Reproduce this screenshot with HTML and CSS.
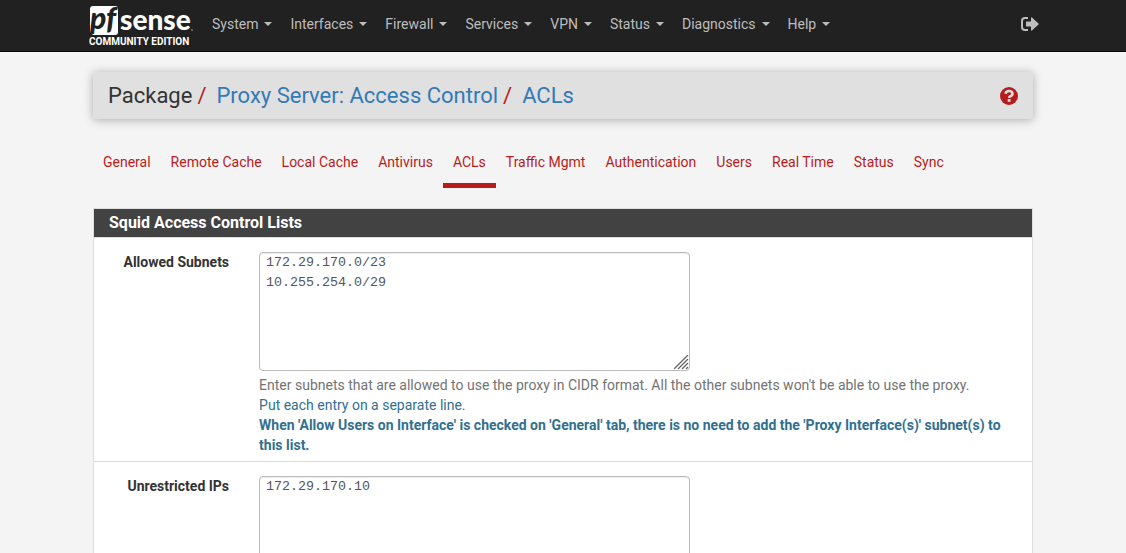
FILE: index.html
```html
<!DOCTYPE html>
<html lang="en">
<head>
    <meta charset="UTF-8">
    <meta name="viewport" content="width=device-width, initial-scale=1">
    <title>Package / Proxy Server: Access Control / ACLs</title>
    <link rel="stylesheet" href="styles.css">
</head>
<body>
    <nav class="navbar">
        <div class="container navbar-inner">
            <a class="brand" href="#" aria-label="pfSense Community Edition">
                <svg width="108" height="42" viewBox="0 0 108 42">
                    <path class="brand-box" d="M7 1H29a3 3 0 0 1 3 3V27a3 3 0 0 1-3 3H7L4 27V4a3 3 0 0 1 3-3z"/>
                    <text class="brand-pf" x="4" y="24">pf</text>
                    <text class="brand-sense" x="34" y="25">sense</text>
                    <circle class="brand-dot" cx="106" cy="25" r="1"/>
                    <text class="brand-edition" x="3" y="40">COMMUNITY EDITION</text>
                </svg>
            </a>
            <ul class="nav">
                <li><a href="#">System <span class="caret"></span></a></li>
                <li><a href="#">Interfaces <span class="caret"></span></a></li>
                <li><a href="#">Firewall <span class="caret"></span></a></li>
                <li><a href="#">Services <span class="caret"></span></a></li>
                <li><a href="#">VPN <span class="caret"></span></a></li>
                <li><a href="#">Status <span class="caret"></span></a></li>
                <li><a href="#">Diagnostics <span class="caret"></span></a></li>
                <li><a href="#">Help <span class="caret"></span></a></li>
            </ul>
            <a class="logout" href="#" aria-label="Logout">
                <svg width="18" height="14" viewBox="0 0 18 14">
                    <path d="M7 1H4a3 3 0 0 0-3 3v6a3 3 0 0 0 3 3h3" fill="none" stroke="currentColor" stroke-width="2"/>
                    <path d="M5 4.500h5V1q0-1 1-.5l7 6.500-7 6.500q-1 .5-1-.5V9.500H5z" fill="currentColor"/>
                </svg>
            </a>
        </div>
    </nav>

    <div class="container">
        <header class="page-header">
            <h1 class="breadcrumb">
                <span>Package</span>
                <span class="slash">/</span>
                <a href="#">Proxy Server: Access Control</a>
                <span class="slash">/</span>
                <a href="#">ACLs</a>
            </h1>
            <a class="help" href="#" aria-label="Help">
                <svg width="18" height="18" viewBox="0 0 18 18">
                    <circle cx="9" cy="9" r="9" fill="currentColor"/>
                    <path d="M5.500 6.700Q6 4 9 4q3.500 0 3.500 2.700 0 1.500-1.800 2.300-1.500.6-1.500 2" fill="none" stroke="#e0e0e0" stroke-width="2.600"/>
                    <rect x="7.700" y="12" width="2.800" height="2.800" fill="#e0e0e0"/>
                </svg>
            </a>
        </header>

        <ul class="tabs">
            <li><a href="#">General</a></li>
            <li><a href="#">Remote Cache</a></li>
            <li><a href="#">Local Cache</a></li>
            <li><a href="#">Antivirus</a></li>
            <li class="active"><a href="#">ACLs</a></li>
            <li><a href="#">Traffic Mgmt</a></li>
            <li><a href="#">Authentication</a></li>
            <li><a href="#">Users</a></li>
            <li><a href="#">Real Time</a></li>
            <li><a href="#">Status</a></li>
            <li><a href="#">Sync</a></li>
        </ul>

        <form class="panel">
            <h2 class="panel-title">Squid Access Control Lists</h2>
            <div class="form-group">
                <label for="allowed_subnets">Allowed Subnets</label>
                <div class="field">
                    <textarea id="allowed_subnets" spellcheck="false">172.29.170.0/23
10.255.254.0/29</textarea>
                    <p class="help-block">
                        Enter subnets that are allowed to use the proxy in CIDR format. All the other subnets won't be able to use the proxy.<br>
                        <span class="text-info">Put each entry on a separate line.<br>
                        <strong>When 'Allow Users on Interface' is checked on 'General' tab, there is no need to add the 'Proxy Interface(s)' subnet(s) to this list.</strong></span>
                    </p>
                </div>
            </div>
            <div class="form-group">
                <label for="unrestricted_hosts">Unrestricted IPs</label>
                <div class="field">
                    <textarea id="unrestricted_hosts" spellcheck="false">172.29.170.10</textarea>
                </div>
            </div>
        </form>
    </div>
</body>
</html>
```
FILE: styles.css
```css
* {
    box-sizing: border-box;
}

html {
    scrollbar-width: none;
}

body {
    margin: 0;
    background: #f4f4f4;
    color: #333;
    font-family: Roboto, sans-serif;
    font-size: 14px;
    line-height: 20px;
}

a {
    color: #337ab7;
    text-decoration: none;
}

.container {
    max-width: 970px;
    margin: 0 auto;
    padding: 0 15px;
}

/* top bar */
.navbar {
    background: #212121;
    border-bottom: 1px solid #080808;
    margin-bottom: 20px;
}

.navbar-inner {
    display: flex;
    align-items: center;
    min-height: 51px;
    padding: 0 8px;
}

.brand {
    display: flex;
    margin-right: 9px;
}

.brand svg {
    overflow: visible;
}

.brand-box {
    fill: #fff;
}

.brand-pf {
    fill: #212121;
    font: italic 900 30px Lato, sans-serif;
}

.brand-sense {
    fill: #fff;
    font: 900 28px Lato, sans-serif;
}

.brand-dot {
    fill: #777;
}

.brand-edition {
    fill: #fff;
    font: 700 10px Roboto, sans-serif;
}

.nav {
    display: flex;
    flex: 1;
    margin: 0;
    padding: 0;
    list-style: none;
}

.nav a {
    display: flex;
    align-items: center;
    gap: 6px;
    padding: 0 9px;
    color: #bdbdbd;
    white-space: nowrap;
}

.nav li {
    padding-bottom: 3px;
}

.caret {
    border-top: 4px solid;
    border-left: 4px solid transparent;
    border-right: 4px solid transparent;
}

.logout {
    display: flex;
    color: #bdbdbd;
    padding: 0 1px 4px;
}

/* breadcrumb bar */
.page-header {
    display: flex;
    align-items: center;
    justify-content: space-between;
    padding: 10px 15px 9px;
    margin-bottom: 28px;
    background: #e0e0e0;
    border-radius: 2px;
    box-shadow: 0 1px 10px rgba(0, 0, 0, 0.3);
}

.breadcrumb {
    display: flex;
    margin: 0;
    font-size: 22px;
    font-weight: 400;
    line-height: 28px;
}

.slash {
    padding: 0 10px 0 5px;
    color: #b71c1c;
}

.help {
    display: flex;
    color: #b71c1c;
}

/* tabs */
.tabs {
    display: flex;
    margin: 0 0 20px;
    padding: 0;
    list-style: none;
}

.tabs a {
    display: block;
    padding: 5px 10px 11px;
    border-bottom: 5px solid transparent;
    color: #b71c1c;
    white-space: nowrap;
}

.tabs .active a {
    border-color: #b71c1c;
}

/* form */
.panel {
    background: #fff;
    border: 1px solid #ddd;
}

.panel-title {
    margin: 0;
    padding: 4px 15px;
    background: #424242;
    color: #fff;
    font-size: 16px;
    font-weight: 700;
    line-height: 20px;
    border-bottom: 1px solid #ddd;
}

.form-group {
    display: flex;
    padding: 14px 0 6px;
    border-bottom: 1px solid #ddd;
}

.form-group label {
    width: 16%;
    padding-right: 15px;
    font-weight: 700;
    text-align: right;
}

.field {
    flex: 1;
    padding: 0 20px 0 15px;
}

textarea {
    display: block;
    width: 100%;
    max-width: 431px;
    height: 119px;
    padding: 0 6px;
    border: 1px solid #bbb;
    border-radius: 4px;
    box-shadow: inset 0 1px 1px rgba(0, 0, 0, 0.08);
    color: #555;
    font-family: "Liberation Mono", monospace;
    line-height: 20px;
    resize: both;
}

textarea::-webkit-resizer {
    background: url("data:image/svg+xml,%3Csvg xmlns='http://www.w3.org/2000/svg' width='15' height='15'%3E%3Cpath d='M0 14L14 0M4 14L14 4M8 14L14 8M12 14L14 12' stroke='%23666' stroke-width='1.3'/%3E%3C/svg%3E") no-repeat right bottom;
}

.help-block {
    margin: 4px 0 0;
    color: #737373;
}

.text-info {
    color: #31708f;
}
```
